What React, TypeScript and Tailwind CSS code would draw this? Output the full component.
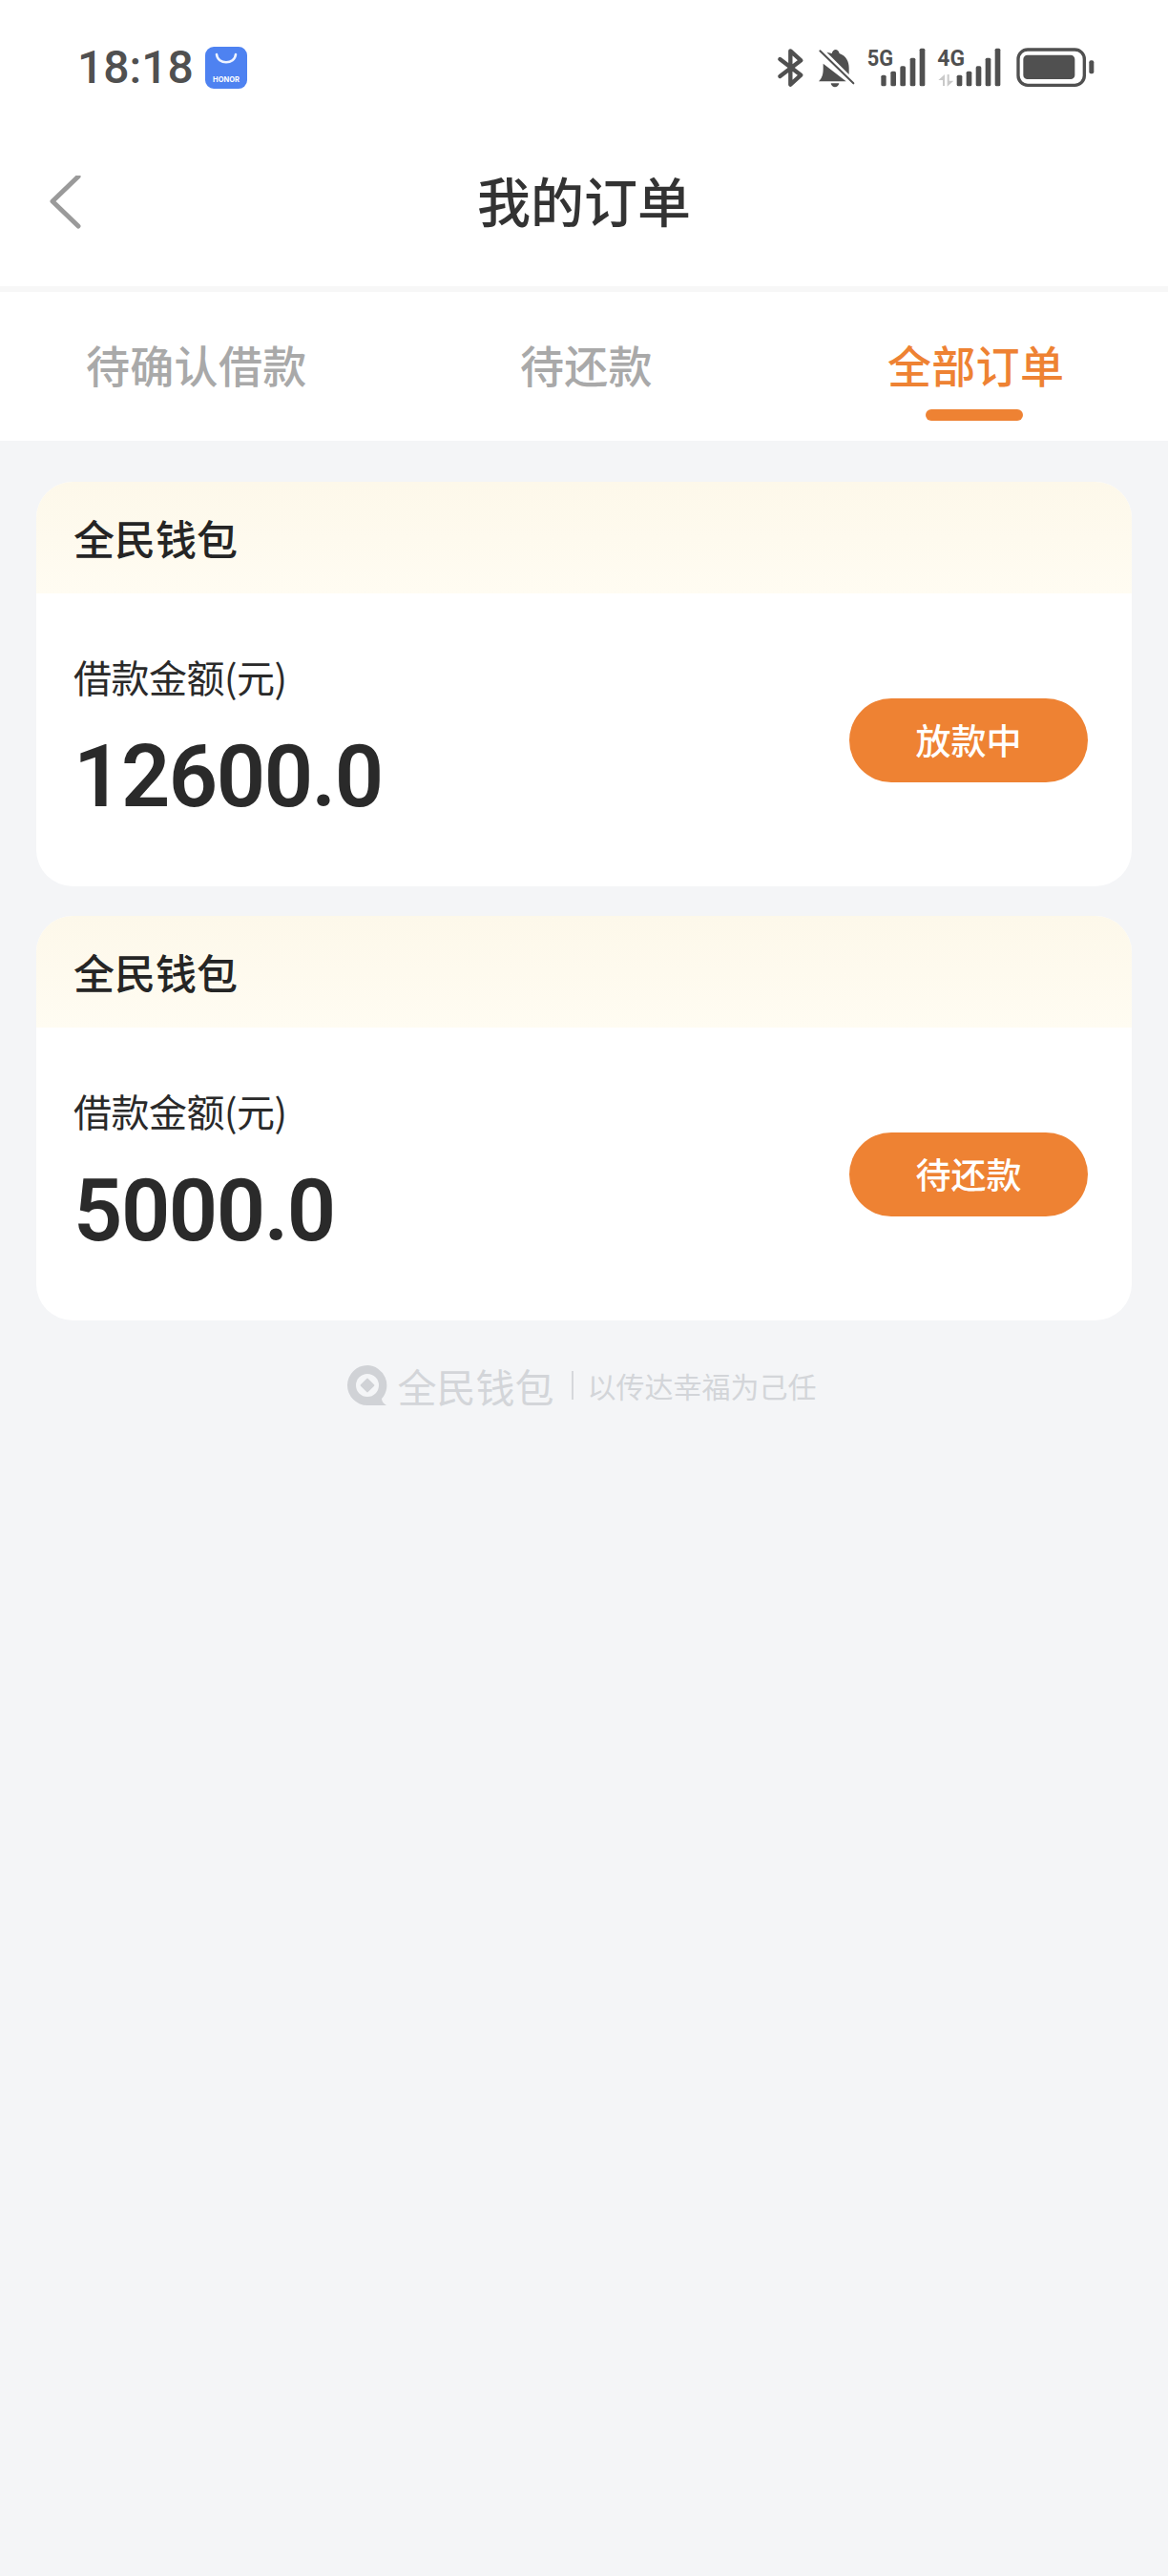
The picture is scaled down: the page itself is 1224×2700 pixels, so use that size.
const CJK = "font-['Noto_Sans_CJK_SC','Noto_Sans',sans-serif]"

function HonorIcon() {
  return (
    <svg width="44" height="44" viewBox="0 0 44 44" className="ml-[12px]">
      <rect width="44" height="44" rx="9" fill="#4e82f1" />
      <path d="M12 8c1 11 19 11 20 0" fill="none" stroke="#eef3ff" strokeWidth="2.6" strokeLinecap="round" />
      <text x="22" y="37" textAnchor="middle" fontSize="7.5" fontWeight="700" fontFamily="Inter, sans-serif" fill="#fff">HONOR</text>
    </svg>
  )
}

function StatusIcons() {
  const c = "#505050"
  return (
    <svg width="400" height="100" viewBox="0 0 1200 300">
      {/* bluetooth */}
      <path d="M112 126l66 50-33 30V100l33 30-66 50" fill="none" stroke={c} strokeWidth="13" strokeLinejoin="round" strokeLinecap="round" />
      {/* muted bell */}
      <path d="M275 108c4-16 20-16 24 0 22 8 30 26 30 46v20l-70-70zM248 140l72 56H234c10-10 14-22 14-40zM272 202h26c-3 16-23 16-26 0z" fill={c} />
      <path d="M238 100l105 102" stroke={c} strokeWidth="6" strokeLinecap="round" />
      {/* 5G */}
      <text x="386" y="148" fontSize="74" fontWeight="700" fontFamily="Roboto, sans-serif" fill={c} textLength="82" lengthAdjust="spacingAndGlyphs">5G</text>
      <rect x="430" y="176" width="16" height="35" rx="5" fill={c} />
      <rect x="460" y="164" width="17" height="47" rx="5" fill={c} />
      <rect x="490" y="148" width="17" height="63" rx="5" fill={c} />
      <rect x="521" y="122" width="17" height="89" rx="5" fill={c} />
      <rect x="551" y="92" width="17" height="119" rx="5" fill={c} />
      {/* 4G */}
      <text x="607" y="148" fontSize="74" fontWeight="700" fontFamily="Roboto, sans-serif" fill={c} textLength="86" lengthAdjust="spacingAndGlyphs">4G</text>
      <path d="M610 192l20-18v36h-6v-18zM658 194l-20 18v-38h6v20z" fill="#c9c9c9" />
      <rect x="668" y="176" width="17" height="35" rx="5" fill={c} />
      <rect x="698" y="164" width="17" height="47" rx="5" fill={c} />
      <rect x="728" y="148" width="17" height="63" rx="5" fill={c} />
      <rect x="758" y="122" width="17" height="89" rx="5" fill={c} />
      <rect x="788" y="92" width="17" height="119" rx="5" fill={c} />
      {/* battery */}
      <rect x="861" y="96" width="208" height="112" rx="30" fill="none" stroke={c} strokeWidth="10" />
      <rect x="877" y="113" width="162" height="76" rx="13" fill={c} />
      <rect x="1084" y="130" width="15" height="42" rx="6" fill={c} />
    </svg>
  )
}

function StatusBar() {
  return (
    <div className="h-[128px] pl-[81px] flex items-start justify-between">
      <div className="flex items-center mt-[41px] h-[60px]">
        <span className="font-['Roboto'] text-[48px] leading-none font-medium text-[#505050]">18:18</span>
        <HonorIcon />
      </div>
      <div className="mt-[20px] mr-[44px]">
        <StatusIcons />
      </div>
    </div>
  )
}

function Header() {
  return (
    <div className="relative h-[178px] flex justify-center pt-[45px] border-b-[6px] border-[#f7f7f7]">
      <svg className="absolute left-[50px] top-[56px]" width="36" height="56" viewBox="0 0 36 56">
        <path d="M32 4L5 30l27 26" transform="translate(0 -3)" fill="none" stroke="#9a9a9a" strokeWidth="5" strokeLinecap="round" strokeLinejoin="round" />
      </svg>
      <h1 className="text-[56px] leading-[72px] font-medium text-[#333333]">我的订单</h1>
    </div>
  )
}

function Tabs() {
  return (
    <div className="relative h-[156px] bg-white flex text-[46px] leading-[60px] font-medium pt-[45px] tracking-[0.3px]">
      <div className="ml-[90px] w-[455px] text-[#a9a9a9]">待确认借款</div>
      <div className="w-[385px] text-[#a9a9a9]">待还款</div>
      <div className="text-[#ee8233] flex flex-col">
        全部订单
        <div className="w-[102px] h-[12px] rounded-full bg-[#ee8233] self-start ml-[40px] mt-[18px]" />
      </div>
    </div>
  )
}

function OrderCard({ amount, status }: { amount: string; status: string }) {
  return (
    <div className="rounded-[38px] bg-white overflow-hidden">
      <div className="h-[117px] pl-[39px] pt-[28px] bg-gradient-to-b from-[#fdf8ea] to-[#fffcf2] text-[43px] leading-[60px] font-medium text-[#252525]">
        全民钱包
      </div>
      <div className="h-[307px] pl-[39px] pr-[46px] flex items-center justify-between">
        <div className="flex flex-col -mt-[6px]">
          <div className="text-[40px] leading-[56px] text-[#2a2a2a] tracking-[-0.5px]">借款金额(元)</div>
          <div className="font-['Roboto'] text-[90px] leading-[100px] font-semibold tracking-[-1.5px] text-[#2a2a2a] mt-[28px]">{amount}</div>
        </div>
        <div className="w-[250px] h-[88px] rounded-full bg-[#ee8233] flex items-center justify-center text-white text-[37px] font-medium">
          {status}
        </div>
      </div>
    </div>
  )
}

function Footer() {
  return (
    <div className="flex items-center justify-center mt-[43px] text-[#d3d5d9] pr-[6px]">
      <svg width="44" height="44" viewBox="0 0 44 44">
        <path d="M22 1a21 21 0 1 0 0 42h20c-3-2-5-4-5-7a21 21 0 0 0-15-35z" fill="#d0d2d6" />
        <circle cx="22" cy="22" r="12" fill="#f4f5f7" />
        <rect x="16.5" y="16.5" width="11" height="11" rx="1" transform="rotate(45 22 22)" fill="#d0d2d6" />
      </svg>
      <span className="ml-[10px] text-[41px] leading-[50px] font-normal">全民钱包</span>
      <span className="w-[2px] h-[30px] bg-[#d6d8db] ml-[18px] mr-[15px]" />
      <span className="text-[30px] leading-[50px]">以传达幸福为己任</span>
    </div>
  )
}

export default function App() {
  return (
    <div className={`${CJK} min-h-[2700px] bg-[#f4f5f7]`}>
      <div className="bg-white">
        <StatusBar />
        <Header />
      </div>
      <Tabs />
      <div className="px-[38px] pt-[43px] flex flex-col gap-[31px]">
        <OrderCard amount="12600.0" status="放款中" />
        <OrderCard amount="5000.0" status="待还款" />
      </div>
      <Footer />
    </div>
  )
}
